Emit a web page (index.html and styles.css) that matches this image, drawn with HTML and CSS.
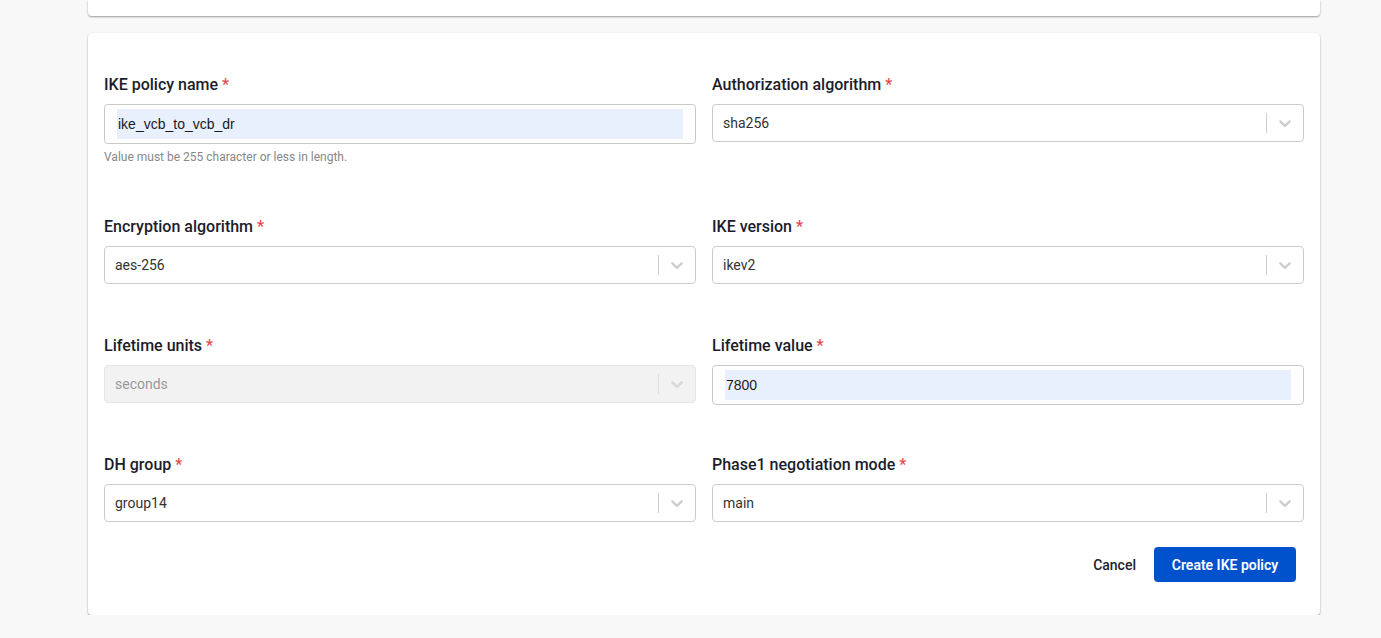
FILE: index.html
```html
<!DOCTYPE html>
<html>
<head>
<meta charset="utf-8">
<link rel="stylesheet" href="styles.css">
</head>
<body>
<div class="page">
  <div class="card card-top"></div>
  <div class="card card-form">
    <div class="grid">
      <div class="field">
        <div class="label">IKE policy name <span class="req">*</span></div>
        <div class="input"><span class="autofill">ike_vcb_to_vcb_dr</span></div>
        <div class="help">Value must be 255 character or less in length.</div>
      </div>
      <div class="field">
        <div class="label">Authorization algorithm <span class="req">*</span></div>
        <div class="select"><span class="value">sha256</span><span class="sep"></span><span class="ind"><svg viewBox="0 0 20 20" width="20" height="20"><path d="M4.516 7.548c0.436-0.446 1.043-0.481 1.576 0l3.908 3.747 3.908-3.747c0.533-0.481 1.141-0.446 1.574 0 0.436 0.445 0.408 1.197 0 1.615-0.406 0.418-4.695 4.502-4.695 4.502-0.217 0.223-0.502 0.335-0.787 0.335s-0.57-0.112-0.789-0.335c0 0-4.287-4.084-4.695-4.502s-0.436-1.17 0-1.615z"/></svg></span></div>
      </div>
      <div class="field">
        <div class="label">Encryption algorithm <span class="req">*</span></div>
        <div class="select"><span class="value">aes-256</span><span class="sep"></span><span class="ind"><svg viewBox="0 0 20 20" width="20" height="20"><path d="M4.516 7.548c0.436-0.446 1.043-0.481 1.576 0l3.908 3.747 3.908-3.747c0.533-0.481 1.141-0.446 1.574 0 0.436 0.445 0.408 1.197 0 1.615-0.406 0.418-4.695 4.502-4.695 4.502-0.217 0.223-0.502 0.335-0.787 0.335s-0.57-0.112-0.789-0.335c0 0-4.287-4.084-4.695-4.502s-0.436-1.17 0-1.615z"/></svg></span></div>
      </div>
      <div class="field">
        <div class="label">IKE version <span class="req">*</span></div>
        <div class="select"><span class="value">ikev2</span><span class="sep"></span><span class="ind"><svg viewBox="0 0 20 20" width="20" height="20"><path d="M4.516 7.548c0.436-0.446 1.043-0.481 1.576 0l3.908 3.747 3.908-3.747c0.533-0.481 1.141-0.446 1.574 0 0.436 0.445 0.408 1.197 0 1.615-0.406 0.418-4.695 4.502-4.695 4.502-0.217 0.223-0.502 0.335-0.787 0.335s-0.57-0.112-0.789-0.335c0 0-4.287-4.084-4.695-4.502s-0.436-1.17 0-1.615z"/></svg></span></div>
      </div>
      <div class="field">
        <div class="label">Lifetime units <span class="req">*</span></div>
        <div class="select disabled"><span class="value">seconds</span><span class="sep"></span><span class="ind"><svg viewBox="0 0 20 20" width="20" height="20"><path d="M4.516 7.548c0.436-0.446 1.043-0.481 1.576 0l3.908 3.747 3.908-3.747c0.533-0.481 1.141-0.446 1.574 0 0.436 0.445 0.408 1.197 0 1.615-0.406 0.418-4.695 4.502-4.695 4.502-0.217 0.223-0.502 0.335-0.787 0.335s-0.57-0.112-0.789-0.335c0 0-4.287-4.084-4.695-4.502s-0.436-1.17 0-1.615z"/></svg></span></div>
      </div>
      <div class="field">
        <div class="label">Lifetime value <span class="req">*</span></div>
        <div class="input"><span class="autofill">7800</span></div>
      </div>
      <div class="field">
        <div class="label">DH group <span class="req">*</span></div>
        <div class="select"><span class="value">group14</span><span class="sep"></span><span class="ind"><svg viewBox="0 0 20 20" width="20" height="20"><path d="M4.516 7.548c0.436-0.446 1.043-0.481 1.576 0l3.908 3.747 3.908-3.747c0.533-0.481 1.141-0.446 1.574 0 0.436 0.445 0.408 1.197 0 1.615-0.406 0.418-4.695 4.502-4.695 4.502-0.217 0.223-0.502 0.335-0.787 0.335s-0.57-0.112-0.789-0.335c0 0-4.287-4.084-4.695-4.502s-0.436-1.17 0-1.615z"/></svg></span></div>
      </div>
      <div class="field">
        <div class="label">Phase1 negotiation mode <span class="req">*</span></div>
        <div class="select"><span class="value">main</span><span class="sep"></span><span class="ind"><svg viewBox="0 0 20 20" width="20" height="20"><path d="M4.516 7.548c0.436-0.446 1.043-0.481 1.576 0l3.908 3.747 3.908-3.747c0.533-0.481 1.141-0.446 1.574 0 0.436 0.445 0.408 1.197 0 1.615-0.406 0.418-4.695 4.502-4.695 4.502-0.217 0.223-0.502 0.335-0.787 0.335s-0.57-0.112-0.789-0.335c0 0-4.287-4.084-4.695-4.502s-0.436-1.17 0-1.615z"/></svg></span></div>
      </div>
    </div>
    <div class="actions">
      <button class="btn btn-link">Cancel</button>
      <button class="btn btn-primary">Create IKE policy</button>
    </div>
  </div>
</div>
</body>
</html>
```

FILE: styles.css
```css
* { box-sizing: border-box; }
html, body { margin: 0; padding: 0; }
body {
  background: #f8f8f8;
  font-family: Roboto, "Noto Sans", Arial, sans-serif;
  color: #1b1d2b;
}
.page {
  padding: 0 61px 0 88px;
}
.card {
  background: #fff;
  border-radius: 4px;
  box-shadow: 0 1px 2px rgba(0,0,0,0.38);
}
.card-top {
  height: 16px;
  border-radius: 0 0 4px 4px;
  margin-bottom: 17px;
}
.card-form {
  padding: 42px 16px 33px;
}
.grid {
  display: grid;
  grid-template-columns: 1fr 1fr;
  column-gap: 16px;
  row-gap: 50px;
}
.field {
  display: flex;
  flex-direction: column;
}
.label {
  font-size: 16px;
  font-weight: 500;
  line-height: 20px;
  margin-bottom: 9px;
  color: #1b1d2b;
}
.req { color: #e5484d; }
.input {
  height: 40px;
  border: 1px solid #c8c8c8;
  border-radius: 4px;
  padding: 4px 12px 4px 12px;
  display: flex;
}
.autofill {
  flex: 1;
  background: #e8f0fe;
  font-family: "Liberation Sans", Arial, sans-serif;
  font-size: 14px;
  line-height: 30px;
  color: #1a1a1a;
  padding-left: 1px;
}
.help {
  font-size: 12px;
  line-height: 20px;
  margin-top: 3px;
  color: #888;
}
.select {
  height: 38px;
  margin: 0 0 2px;
  border: 1px solid #cccccc;
  border-radius: 4px;
  display: flex;
  align-items: center;
  background: #fff;
}
.select .value {
  flex: 1;
  padding-left: 10px;
  font-size: 14px;
  color: #333;
}
.select .sep {
  width: 1px;
  align-self: stretch;
  margin: 8px 0;
  background: #cccccc;
}
.select .ind {
  padding: 8px;
  display: flex;
}
.select .ind svg { fill: #cccccc; }
.select.disabled {
  background: #f2f2f2;
  border-color: #e6e6e6;
}
.select.disabled .value { color: #999; }
.select.disabled .sep { background: #e0e0e0; }
.select.disabled .ind svg { fill: #d6d6d6; }
.actions {
  display: flex;
  justify-content: flex-end;
  align-items: center;
  margin-top: 23px;
  padding-right: 8px;
  gap: 2px;
}
.btn {
  font-family: Roboto, Arial, sans-serif;
  font-size: 14px;
  height: 35px;
  border-radius: 4px;
  border: none;
  cursor: pointer;
}
.btn-link {
  background: transparent;
  color: #1b1d2b;
  font-weight: 500;
  padding: 0 16px;
}
.btn-primary {
  background: #0052cc;
  color: #fff;
  font-weight: 600;
  width: 142px;
  padding: 0;
}
```
